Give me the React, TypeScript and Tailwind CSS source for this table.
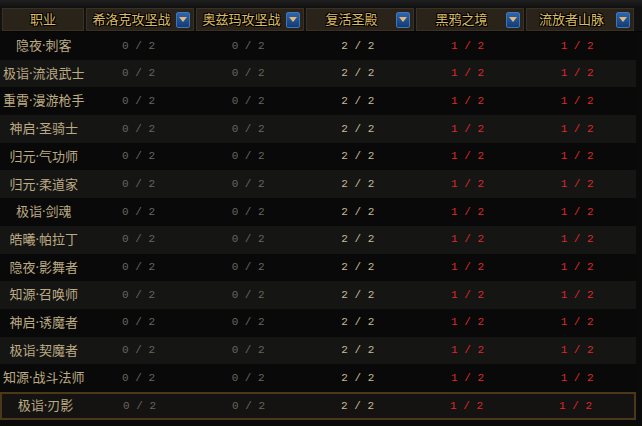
import React from "react";

const columns = ["希洛克攻坚战", "奥兹玛攻坚战", "复活圣殿", "黑鸦之境", "流放者山脉"];

const jobs = [
  "隐夜·刺客",
  "极诣·流浪武士",
  "重霄·漫游枪手",
  "神启·圣骑士",
  "归元·气功师",
  "归元·柔道家",
  "极诣·剑魂",
  "皓曦·帕拉丁",
  "隐夜·影舞者",
  "知源·召唤师",
  "神启·诱魔者",
  "极诣·契魔者",
  "知源·战斗法师",
  "极诣·刃影",
];

const values = [
  { text: "0 / 2", color: "text-[#66665f]" },
  { text: "0 / 2", color: "text-[#66665f]" },
  { text: "2 / 2", color: "text-[#c9bb94]" },
  { text: "1 / 2", color: "text-[#df2828]" },
  { text: "1 / 2", color: "text-[#df2828]" },
];

// Noto Sans first so the middle dot stays narrow, CJK glyphs fall through
const cjk = { fontFamily: '"Noto Sans", "Noto Sans CJK SC", sans-serif' };
const mono = { fontFamily: '"Liberation Mono", "DejaVu Sans Mono", monospace' };

function DropButton() {
  return (
    <div className="w-[14px] h-[16px] rounded-[2px] border border-[#3f76b8] bg-gradient-to-b from-[#2d66ad] to-[#143c74] flex items-center justify-center shrink-0">
      <svg width="8" height="5" viewBox="0 0 8 5">
        <path d="M0 0 L8 0 L4 5 Z" fill="#e6b877" />
      </svg>
    </div>
  );
}

export default function App() {
  return (
    <div className="w-[642px] h-[426px] bg-[#0a0a0a] overflow-hidden relative" style={cjk}>
      <div className="h-[8px] bg-gradient-to-b from-[#202020] to-[#101010]" />
      {/* header */}
      <div className="flex h-[23px] pl-[2px] gap-[2px] bg-[#111]">
        <div className="w-[82px] bg-[#2a231a] border border-[#3a3124] flex items-center justify-center text-[13px] text-[#dcbb62] [text-shadow:1px_1px_0_#000,-1px_-1px_0_#000,1px_-1px_0_#000,-1px_1px_0_#000]">
          职业
        </div>
        {columns.map((c) => (
          <div
            key={c}
            className="w-[108px] bg-[#2a231a] border border-[#3a3124] flex items-center pr-[3px]"
          >
            <div className="flex-1 text-center text-[13px] text-[#dcbb62] leading-none [text-shadow:1px_1px_0_#000,-1px_-1px_0_#000,1px_-1px_0_#000,-1px_1px_0_#000]">
              {c}
            </div>
            <DropButton />
          </div>
        ))}
      </div>
      <div className="h-[1px] bg-[#050505]" />
      {/* rows */}
      <div className="w-[636px]">
        {jobs.map((job, i) => {
          const last = i === jobs.length - 1;
          return (
            <div
              key={job}
              className={
                "flex items-center h-[27.7px] " +
                (last
                  ? "border-2 border-[#4a3818] bg-[#141311]"
                  : i % 2 === 0
                  ? "bg-[#090909]"
                  : "bg-[#151514]")
              }
            >
              <div className="w-[88px] text-center text-[13px] text-[#bcab84] whitespace-nowrap">
                {job}
              </div>
              {values.map((v, j) => (
                <div key={j} className={"w-[110px] pr-[8px] text-center text-[11px] " + v.color} style={mono}>
                  {v.text.split(" ").join("\u00a0")}
                </div>
              ))}
            </div>
          );
        })}
      </div>
    </div>
  );
}
